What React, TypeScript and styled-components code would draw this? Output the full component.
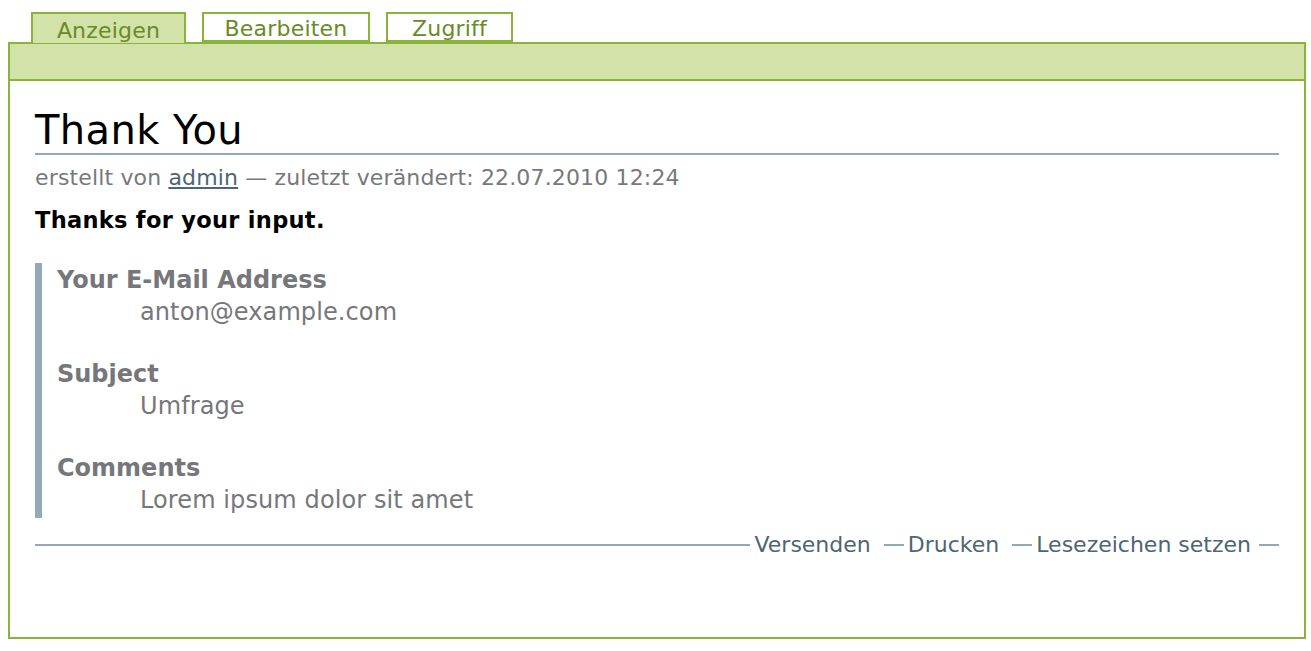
import React from "react";
import styled, { createGlobalStyle } from "styled-components";

const GlobalStyle = createGlobalStyle`
  body {
    margin: 8px 5px 8px 8px;
    background: #ffffff;
    font-family: "DejaVu Sans", "Liberation Sans", sans-serif;
  }
  * { box-sizing: border-box; }
`;

const GREEN = "#8ab33a";
const GREEN_FILL = "#d3e2a9";
const SLATE = "#93a9b9";
const GREY = "#76777b";
const LINK = "#4d6575";

const Page = styled.div`
  display: flex;
  flex-direction: column;
`;

const TabRow = styled.ul`
  display: flex;
  gap: 16px;
  list-style: none;
  margin: 0 0 -1px;
  padding: 4px 0 0 23px;
  position: relative;
  z-index: 1;
`;

const Tab = styled.li<{ $active?: boolean; $w: number }>`
  border: 2px solid ${GREEN};
  border-bottom: ${(p) => (p.$active ? "none" : `2px solid ${GREEN}`)};
  background: ${(p) => (p.$active ? GREEN_FILL : "#ffffff")};
  color: #6a8a27;
  font-size: 22px;
  height: ${(p) => (p.$active ? "31px" : "30px")};
  width: ${(p) => p.$w}px;
  display: flex;
  align-items: center;
  justify-content: center;
  padding-top: 4px;
  letter-spacing: 0.2px;
  line-height: 1;
`;

const Bar = styled.div`
  height: 39px;
  background: ${GREEN_FILL};
  border: 2px solid ${GREEN};
`;

const Content = styled.div`
  border: 2px solid ${GREEN};
  border-top: none;
  padding: 29px 25px 79px 25px;
  display: flex;
  flex-direction: column;
`;

const Title = styled.h1`
  margin: 0;
  font-weight: normal;
  font-size: 40px;
  color: #000;
  line-height: 40px;
  border-bottom: 2px solid ${SLATE};
  padding-bottom: 3px;
  letter-spacing: 0.4px;
`;

const Meta = styled.div`
  margin-top: 10px;
  font-size: 22px;
  color: #76797c;
  line-height: 26px;
  letter-spacing: 0.15px;
  a {
    color: ${LINK};
    text-decoration: underline;
  }
`;

const Lead = styled.p`
  margin: 16px 0 0;
  font-size: 22.5px;
  font-weight: bold;
  color: #000;
  line-height: 26px;
  letter-spacing: 0.3px;
`;

const List = styled.dl`
  margin: 30px 0 0;
  border-left: 7px solid ${SLATE};
  padding: 2px 0 3px 15px;
  display: flex;
  flex-direction: column;
`;

const Term = styled.dt<{ $first?: boolean }>`
  font-weight: bold;
  font-size: 24px;
  color: ${GREY};
  line-height: 30px;
  margin-top: ${(p) => (p.$first ? "0" : "32px")};
`;

const Desc = styled.dd`
  margin: 2px 0 0 83px;
  font-size: 24px;
  color: ${GREY};
  line-height: 30px;
  letter-spacing: 0.1px;
`;

const Footer = styled.div`
  margin-top: 14px;
  display: flex;
  align-items: center;
  font-size: 22px;
  line-height: 26px;
  color: ${LINK};
`;

const Rule = styled.span<{ $grow?: boolean }>`
  flex: ${(p) => (p.$grow ? "1" : "0 0 20px")};
  height: 2px;
  background: ${SLATE};
`;

const Action = styled.a<{ $last?: boolean }>`
  color: ${LINK};
  text-decoration: none;
  margin: 0 ${(p) => (p.$last ? "8px" : "13px")} 0 4px;
`;

const fields = [
  { term: "Your E-Mail Address", value: "anton@example.com" },
  { term: "Subject", value: "Umfrage" },
  { term: "Comments", value: "Lorem ipsum dolor sit amet" },
];

export default function App() {
  return (
    <Page>
      <GlobalStyle />
      <TabRow>
        <Tab $active $w={155}>Anzeigen</Tab>
        <Tab $w={168}>Bearbeiten</Tab>
        <Tab $w={127}>Zugriff</Tab>
      </TabRow>
      <Bar />
      <Content>
        <Title>Thank You</Title>
        <Meta>
          erstellt von <a href="#">admin</a> — zuletzt verändert: 22.07.2010 12:24
        </Meta>
        <Lead>Thanks for your input.</Lead>
        <List>
          {fields.map((f, i) => (
            <React.Fragment key={f.term}>
              <Term $first={i === 0}>{f.term}</Term>
              <Desc>{f.value}</Desc>
            </React.Fragment>
          ))}
        </List>
        <Footer>
          <Rule $grow />
          <Action href="#">Versenden</Action>
          <Rule />
          <Action href="#">Drucken</Action>
          <Rule />
          <Action href="#" $last>Lesezeichen setzen</Action>
          <Rule />
        </Footer>
      </Content>
    </Page>
  );
}
